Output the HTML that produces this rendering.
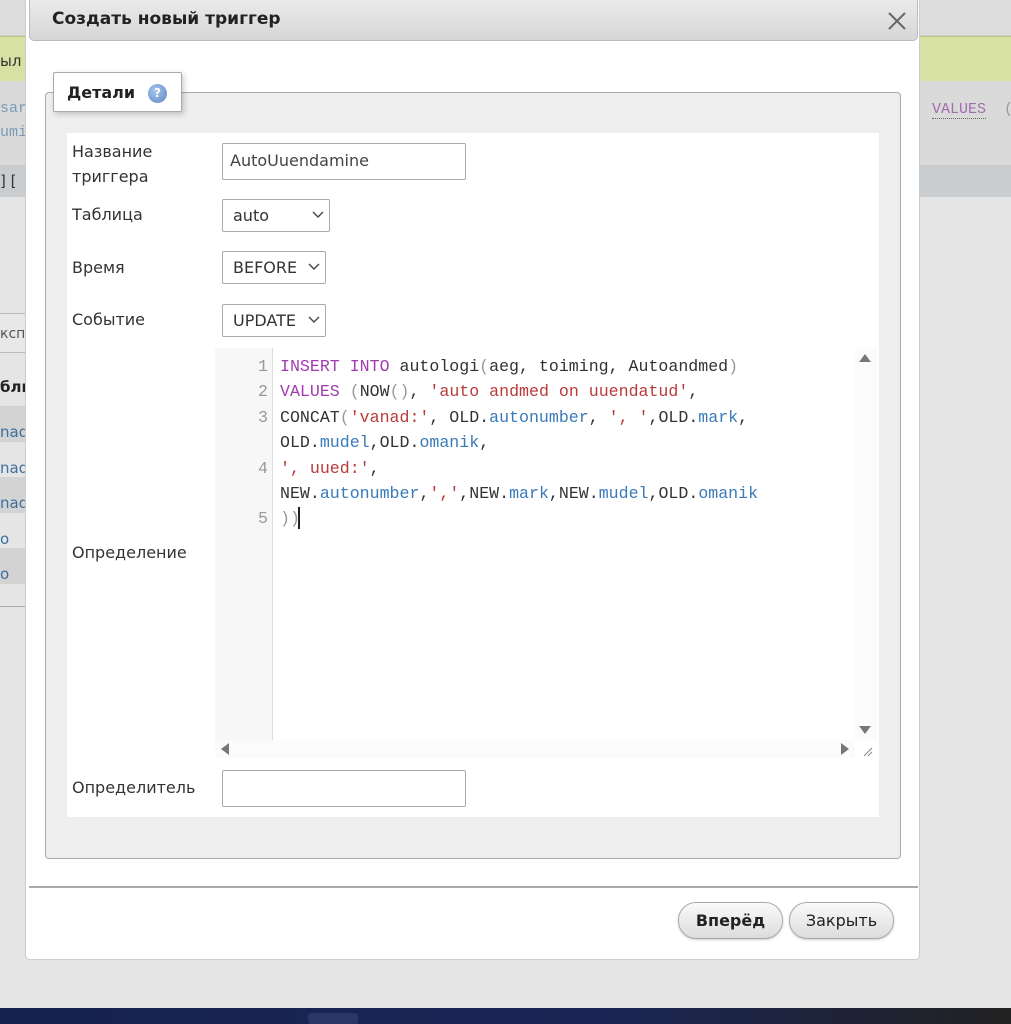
<!DOCTYPE html>
<html><head><meta charset="utf-8">
<style>
*{box-sizing:border-box;margin:0;padding:0}
body{width:1011px;height:1024px;overflow:hidden;background:#e5e5e5;font-family:"DejaVu Sans","Liberation Sans",sans-serif;position:relative;color:#222}
.a{position:absolute}
.mono{font-family:"Liberation Mono","DejaVu Sans Mono",monospace}
</style></head><body>
<!-- background page -->
<div class="a" style="left:0;top:0;width:1011px;height:36px;background:#dcdcdc;border-bottom:1px solid #ccc"></div>
<div class="a" style="left:0;top:36px;width:1011px;height:45px;background:#d7e1a3;border-top:1px solid #b9c77a"></div>
<div class="a" style="left:0;top:52px;font-size:15px;color:#333">ыл</div>
<div class="a" style="left:0;top:81px;width:1011px;height:84px;background:#dadada"></div>
<div class="a mono" style="left:0;top:100px;font-size:15px;color:#7a9ab8">sar</div>
<div class="a mono" style="left:0;top:124px;font-size:15px;color:#7a9ab8">umi</div>
<div class="a mono" style="left:932px;top:101px;font-size:15px;color:#a36bb0;border-bottom:1px dotted #666">VALUES</div>
<div class="a mono" style="left:1004px;top:101px;font-size:15px;color:#999">(</div>
<div class="a" style="left:0;top:165px;width:1011px;height:32px;background:#c9cdd0"></div>
<div class="a" style="left:0;top:172px;font-size:15px;color:#333">] [</div>
<div class="a" style="left:0;top:313px;width:26px;height:40px;border-top:1px solid #bbb;border-bottom:1px solid #bbb;background:#e8e8e8;font-size:14px;color:#555;padding-top:12px">ксп</div>
<div class="a" style="left:0;top:378px;font-size:15px;font-weight:bold">бли</div>
<div class="a" style="left:0;top:406px;width:26px;height:36px;background:#d3d3d3"></div>
<div class="a" style="left:0;top:477px;width:26px;height:36px;background:#d3d3d3"></div>
<div class="a" style="left:0;top:548px;width:26px;height:36px;background:#d3d3d3"></div>
<div class="a" style="left:0;top:415px;font-size:15px;color:#3c6f9c;line-height:35.5px">nad<br>nad<br>nad<br>o<br>o</div>
<div class="a" style="left:0;top:606px;width:26px;border-top:1px solid #aaa"></div>
<div class="a" style="left:0;top:1008px;width:1011px;height:16px;background:linear-gradient(90deg,#16224f,#1a2555 60%,#222 100%)"></div>
<div class="a" style="left:308px;top:1013px;width:50px;height:11px;background:#2a3668;border-radius:3px"></div>
<!-- dialog -->
<div class="a" style="left:25px;top:-6px;width:895px;height:966px;background:#fff;border:1px solid #ccc;border-radius:5px"></div>
<div class="a" style="left:29px;top:-4px;width:889px;height:45px;background:linear-gradient(#ececec,#d6d6d6);border:1px solid #bbb;border-radius:0 0 5px 5px"></div>
<div class="a" style="left:52px;top:9px;font-size:17px;font-weight:bold;color:#222">Создать новый триггер</div>
<svg class="a" style="left:887px;top:11px" width="20" height="20"><path d="M2 2L18 18M18 2L2 18" stroke="#666" stroke-width="2"/></svg>
<!-- fieldset -->
<div class="a" style="left:45px;top:92px;width:856px;height:767px;background:#eee;border:1px solid #aaa;border-radius:4px"></div>
<div class="a" style="left:53px;top:72px;width:129px;height:40px;background:#fff;border:1px solid #aaa;border-radius:2px;box-shadow:2px 2px 6px rgba(0,0,0,.2)"></div>
<div class="a" style="left:67px;top:83px;font-size:16px;font-weight:bold">Детали</div>
<div class="a" style="left:148px;top:84px;width:19px;height:19px;border-radius:50%;background:radial-gradient(circle at 40% 35%,#a8c6ec,#5a86c4);color:#fff;font-size:12px;font-weight:bold;text-align:center;line-height:19px">?</div>
<div class="a" style="left:67px;top:133px;width:812px;height:684px;background:#fff"></div>
<div class="a" style="left:72px;top:139px;font-size:16px;line-height:25px;color:#333">Название<br>триггера</div>
<div class="a" style="left:72px;top:205px;font-size:16px;color:#333">Таблица</div>
<div class="a" style="left:72px;top:258px;font-size:16px;color:#333">Время</div>
<div class="a" style="left:72px;top:310px;font-size:16px;color:#333">Событие</div>
<div class="a" style="left:72px;top:543px;font-size:16px;color:#333">Определение</div>
<div class="a" style="left:72px;top:778px;font-size:16px;color:#333">Определитель</div>
<div class="a" style="left:222px;top:143px;width:244px;height:37px;border:1px solid #aaa;border-radius:2px;font-size:16px;padding:7px 7px;color:#444">AutoUuendamine</div>
<div class="a" style="left:222px;top:199px;width:108px;height:33px;border:1px solid #aaa;border-radius:2px;font-size:16px;padding:6px 10px;color:#333">auto</div>
<div class="a" style="left:222px;top:251px;width:104px;height:33px;border:1px solid #aaa;border-radius:2px;font-size:16px;padding:6px 10px;color:#333">BEFORE</div>
<div class="a" style="left:222px;top:304px;width:104px;height:33px;border:1px solid #aaa;border-radius:2px;font-size:16px;padding:6px 10px;color:#333">UPDATE</div>
<svg class="a" style="left:312px;top:211px" width="12" height="8"><path d="M1 1L6 6L11 1" stroke="#444" fill="none" stroke-width="1.4"/></svg>
<svg class="a" style="left:308px;top:263px" width="12" height="8"><path d="M1 1L6 6L11 1" stroke="#444" fill="none" stroke-width="1.4"/></svg>
<svg class="a" style="left:308px;top:316px" width="12" height="8"><path d="M1 1L6 6L11 1" stroke="#444" fill="none" stroke-width="1.4"/></svg>
<div class="a" style="left:222px;top:770px;width:244px;height:37px;border:1px solid #aaa;border-radius:2px"></div>
<!-- editor -->
<div class="a" style="left:215px;top:348px;width:662px;height:412px;background:#fff"></div>
<div class="a" style="left:215px;top:348px;width:58px;height:392px;background:#f7f7f7;border-right:1px solid #ddd"></div>
<div class="a" style="left:855px;top:348px;width:22px;height:392px;background:#fbfbfb"></div>
<div class="a" style="left:215px;top:740px;width:640px;height:18px;background:#fbfbfb"></div>
<svg class="a" style="left:857px;top:352px" width="16" height="12"><path d="M2 10L8 2L14 10Z" fill="#777"/></svg>
<svg class="a" style="left:857px;top:724px" width="16" height="12"><path d="M2 2L8 10L14 2Z" fill="#777"/></svg>
<svg class="a" style="left:219px;top:742px" width="12" height="14"><path d="M10 1L2 7L10 13Z" fill="#777"/></svg>
<svg class="a" style="left:839px;top:742px" width="12" height="14"><path d="M2 1L10 7L2 13Z" fill="#777"/></svg>
<svg class="a" style="left:862px;top:746px" width="12" height="12"><path d="M2 10L10 2M6 10L10 6" stroke="#888"/></svg>
<div class="a mono" style="left:240px;top:354px;width:28px;text-align:right;font-size:16.6px;line-height:25.4px;color:#999">1<br>2<br>3<br>&nbsp;<br>4<br>&nbsp;<br>5</div>
<div class="a mono" style="left:280px;top:354px;font-size:16.6px;line-height:25.4px;color:#333;white-space:pre"><span style="color:#a03cb0">INSERT INTO</span> autologi<span style="color:#999">(</span>aeg, toiming, Autoandmed<span style="color:#999">)</span>
<span style="color:#a03cb0">VALUES</span> <span style="color:#999">(</span>NOW<span style="color:#999">()</span>, <span style="color:#b93a3a">'auto andmed on uuendatud'</span>,
CONCAT<span style="color:#999">(</span><span style="color:#b93a3a">'vanad:'</span>, OLD.<span style="color:#3a7ab8">autonumber</span>, <span style="color:#b93a3a">', '</span>,OLD.<span style="color:#3a7ab8">mark</span>,
OLD.<span style="color:#3a7ab8">mudel</span>,OLD.<span style="color:#3a7ab8">omanik</span>,
<span style="color:#b93a3a">', uued:'</span>,
NEW.<span style="color:#3a7ab8">autonumber</span>,<span style="color:#b93a3a">','</span>,NEW.<span style="color:#3a7ab8">mark</span>,NEW.<span style="color:#3a7ab8">mudel</span>,OLD.<span style="color:#3a7ab8">omanik</span>
<span style="color:#999">))</span></div>
<div class="a" style="left:298px;top:507px;width:2px;height:22px;background:#222"></div>
<!-- footer -->
<div class="a" style="left:29px;top:886px;width:889px;height:2px;background:#aaa"></div>
<div class="a" style="left:678px;top:902px;width:105px;height:37px;border:1px solid #aaa;border-radius:18px;background:linear-gradient(#fafafa,#dcdcdc);font-size:16px;font-weight:bold;text-align:center;line-height:35px;box-shadow:0 1px 2px rgba(0,0,0,.2)">Вперёд</div>
<div class="a" style="left:789px;top:902px;width:105px;height:37px;border:1px solid #aaa;border-radius:18px;background:linear-gradient(#fafafa,#dcdcdc);font-size:16px;text-align:center;line-height:35px;box-shadow:0 1px 2px rgba(0,0,0,.2)">Закрыть</div>
</body></html>
